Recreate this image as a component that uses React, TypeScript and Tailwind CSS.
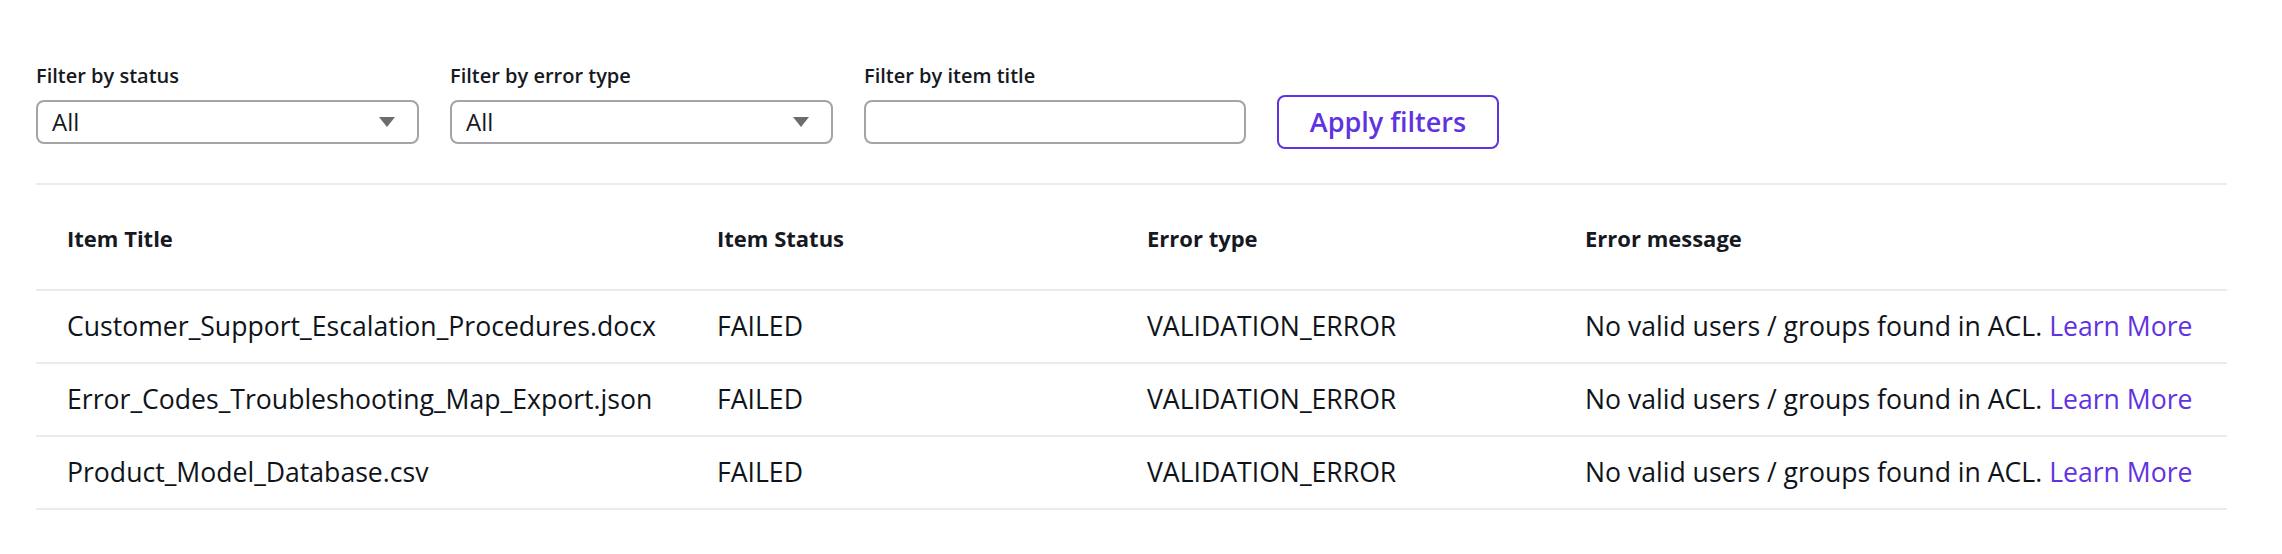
const rows = [
  "Customer_Support_Escalation_Procedures.docx",
  "Error_Codes_Troubleshooting_Map_Export.json",
  "Product_Model_Database.csv",
];

const Caret = () => (
  <svg width="16" height="10" viewBox="0 0 16 10" className="shrink-0">
    <path d="M0 0h16L8 10z" fill="#6b6b70" />
  </svg>
);

const SelectBox = ({ label }: { label: string }) => (
  <div className="flex flex-col gap-[10px] w-[383px]">
    <span className="text-[20px] leading-[28px] text-[#16191f] font-semibold">{label}</span>
    <div className="h-[44px] rounded-[8px] border-2 border-[#a3a3a8] bg-white flex items-center justify-between pl-[14px] pr-[22px]">
      <span className="text-[24px] text-[#16191f]">All</span>
      <Caret />
    </div>
  </div>
);

export default function App() {
  return (
    <div
      className="w-[2282px] h-[554px] bg-white pl-[36px] pr-[55px] pt-[62px]"
      style={{ fontFamily: '"Open Sans", "Liberation Sans", sans-serif' }}
    >
      <div className="flex items-end gap-[31px] pb-[39px]">
        <SelectBox label="Filter by status" />
        <SelectBox label="Filter by error type" />
        <div className="flex flex-col gap-[10px] w-[382px]">
          <span className="text-[20px] leading-[28px] text-[#16191f] font-semibold">Filter by item title</span>
          <div className="h-[44px] rounded-[8px] border-2 border-[#a3a3a8] bg-white" />
        </div>
        <button className="h-[54px] w-[222px] mb-[-5px] rounded-[8px] border-2 border-[#5f33e2] text-[#5f33e2] text-[27px] font-semibold bg-white">
          Apply filters
        </button>
      </div>
      <table className="w-full border-collapse border-t-2 border-[#e9ebed] text-[#16191f]">
        <thead>
          <tr className="h-[106px] border-b-2 border-[#e9ebed]">
            <th className="w-[650px] pl-[31px] pt-[2px] text-left text-[22px] font-bold">Item Title</th>
            <th className="w-[430px] pl-[31px] pt-[2px] text-left text-[22px] font-bold">Item Status</th>
            <th className="w-[438px] pl-[31px] pt-[2px] text-left text-[22px] font-bold">Error type</th>
            <th className="pl-[31px] pt-[2px] text-left text-[22px] font-bold">Error message</th>
          </tr>
        </thead>
        <tbody>
          {rows.map((title) => (
            <tr key={title} className="h-[73px] border-b-2 border-[#e9ebed] text-[26.6px] text-[#0f141a]">
              <td className="pl-[31px]">{title}</td>
              <td className="pl-[31px]">FAILED</td>
              <td className="pl-[31px]">VALIDATION_ERROR</td>
              <td className="pl-[31px] whitespace-nowrap">
                No valid users / groups found in ACL.{" "}
                <a className="text-[#5f33e2]">Learn More</a>
              </td>
            </tr>
          ))}
        </tbody>
      </table>
    </div>
  );
}
